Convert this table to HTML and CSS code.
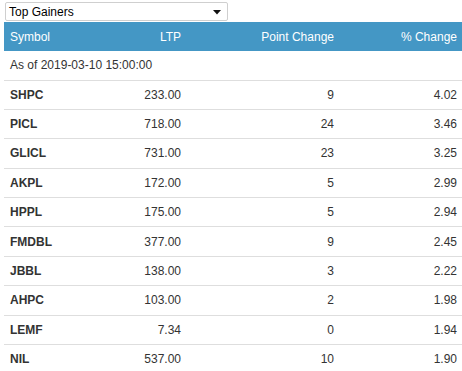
FILE: index.html
```html
<!DOCTYPE html>
<html>
<head>
<meta charset="utf-8">
<link rel="stylesheet" href="styles.css">
</head>
<body>
<div class="widget">
  <div class="picker">
    <span class="picker-label">Top Gainers</span>
    <svg class="picker-arrow" width="8" height="5" viewBox="0 0 8 5"><polygon points="0,0 8,0 4,4.5" fill="#111"/></svg>
  </div>
  <table class="movers">
    <colgroup>
      <col class="c-sym"><col class="c-ltp"><col class="c-pt"><col class="c-pct">
    </colgroup>
    <thead>
      <tr><th class="left">Symbol</th><th>LTP</th><th>Point Change</th><th>% Change</th></tr>
    </thead>
    <tbody>
      <tr class="asof"><td colspan="4" class="left">As of 2019-03-10 15:00:00</td></tr>
      <tr><td class="sym">SHPC</td><td>233.00</td><td>9</td><td>4.02</td></tr>
      <tr><td class="sym">PICL</td><td>718.00</td><td>24</td><td>3.46</td></tr>
      <tr><td class="sym">GLICL</td><td>731.00</td><td>23</td><td>3.25</td></tr>
      <tr><td class="sym">AKPL</td><td>172.00</td><td>5</td><td>2.99</td></tr>
      <tr><td class="sym">HPPL</td><td>175.00</td><td>5</td><td>2.94</td></tr>
      <tr><td class="sym">FMDBL</td><td>377.00</td><td>9</td><td>2.45</td></tr>
      <tr><td class="sym">JBBL</td><td>138.00</td><td>3</td><td>2.22</td></tr>
      <tr><td class="sym">AHPC</td><td>103.00</td><td>2</td><td>1.98</td></tr>
      <tr><td class="sym">LEMF</td><td>7.34</td><td>0</td><td>1.94</td></tr>
      <tr><td class="sym">NIL</td><td>537.00</td><td>10</td><td>1.90</td></tr>
    </tbody>
  </table>
</div>
</body>
</html>
```
FILE: styles.css
```css
html, body {
  margin: 0;
  padding: 0;
  background: #fff;
}
body {
  font-family: "Liberation Sans", Arial, sans-serif;
  font-size: 12px;
  color: #333;
  overflow: hidden;
}
.widget {
  padding: 2px 0 0 4px;
}
.picker {
  box-sizing: border-box;
  width: 223px;
  height: 19px;
  margin-left: 1px;
  border: 1px solid #cfcfcf;
  border-radius: 2px;
  background: #fff;
  display: flex;
  align-items: center;
  justify-content: space-between;
  padding: 0 6px 0 3px;
  color: #000;
  font-size: 12px;
}
.picker-arrow {
  display: block;
  margin-top: 1px;
}
.movers {
  margin-top: 1px;
  width: 458px;
  border-collapse: collapse;
  table-layout: fixed;
}
.c-sym { width: 96px; }
.c-ltp { width: 86px; }
.c-pt { width: 153px; }
.c-pct { width: 123px; }
.movers th {
  background: #4497c5;
  color: #fff;
  font-weight: normal;
  text-align: right;
  height: 29px;
  padding: 0 5px 0 6px;
  box-sizing: border-box;
}
.movers td {
  text-align: right;
  height: 29.4px;
  padding: 0 5px 0 6px;
  border-bottom: 1px solid #dedede;
  box-sizing: border-box;
  vertical-align: middle;
  white-space: nowrap;
}
.movers .left {
  text-align: left;
}
.movers .asof td {
  height: 29px;
}
.movers td.sym {
  text-align: left;
  font-weight: bold;
  color: #333;
}
```
